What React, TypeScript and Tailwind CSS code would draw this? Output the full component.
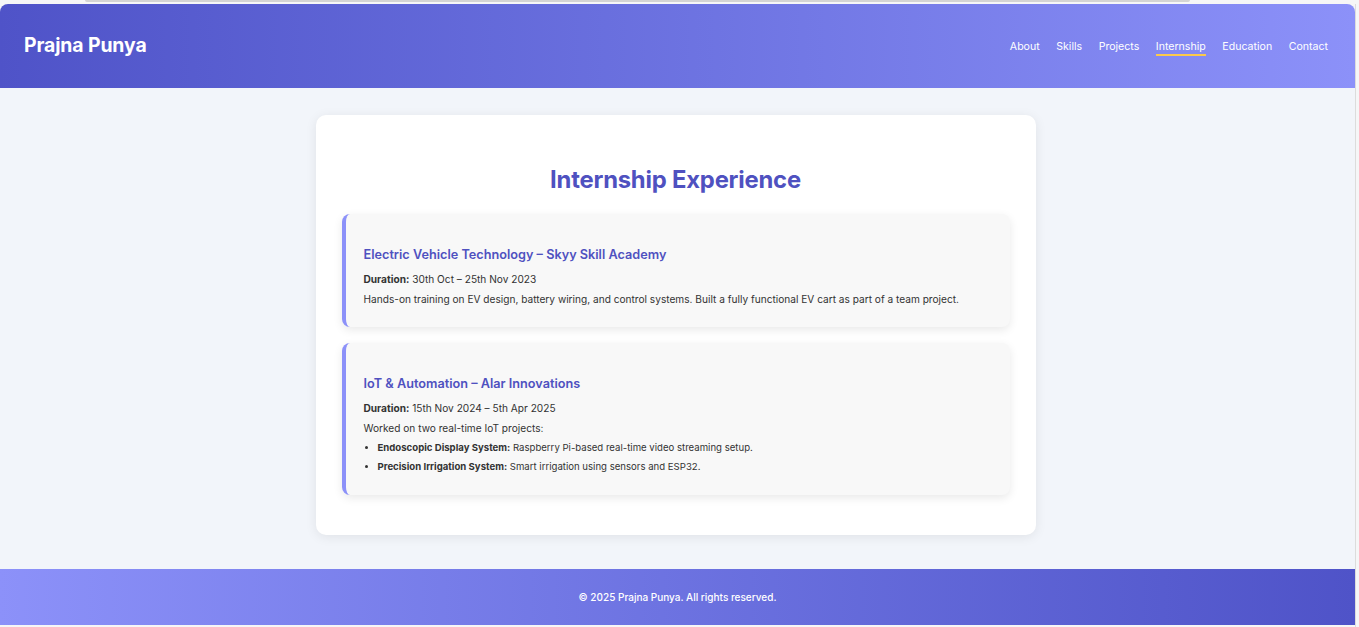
import React from "react";

const navLinks = ["About", "Skills", "Projects", "Internship", "Education", "Contact"];

function Header() {
  return (
    <header className="h-[84px] shrink-0 rounded-t-[8px] bg-gradient-to-r from-[#4f53c8] to-[#8c91f9] flex items-center justify-between pl-[24px] pr-[27px]">
      <h1 className="text-white text-[19.4px] font-bold tracking-[-0.1px]">Prajna Punya</h1>
      <nav className="flex items-center gap-[16.5px] pt-[2px]">
        {navLinks.map((link) => (
          <a
            key={link}
            href="#"
            className={`text-white text-[10.6px] font-normal leading-[15px] ${
              link === "Internship" ? "border-b-2 border-[#fcc94a]" : "border-b-2 border-transparent"
            }`}
          >
            {link}
          </a>
        ))}
      </nav>
    </header>
  );
}

function Internship({ title, duration, children }: { title: string; duration: string; children: React.ReactNode }) {
  return (
    <div className="bg-[#f8f8f8] border-l-4 border-[#8c91f9] rounded-[8px] shadow-[0_3px_10px_rgba(0,0,0,0.09)] pl-[18px] pr-[20px] pt-[33px] pb-[21px]">
      <h3 className="text-[#4f51c0] text-[12.7px] font-semibold leading-[16px]">{title}</h3>
      <p className="text-[#333] text-[10.15px] leading-[14px] mt-[9px]">
        <span className="font-bold">Duration:</span> {duration}
      </p>
      {children}
    </div>
  );
}

export default function App() {
  return (
    <div className="w-[1359px] h-[627px] bg-[#f6f6f7] flex flex-col overflow-hidden" style={{ fontFamily: "Inter, 'Noto Sans', sans-serif" }}>
      {/* frame strip on top */}
      <div className="h-[4px] shrink-0">
        <div className="ml-[85px] w-[1105px] h-[2px] bg-[#d4d4d4] rounded-b" />
      </div>
      <div className="flex flex-1 min-h-0">
        <div className="w-[1355px] flex flex-col">
          <Header />
          <main className="h-[481px] shrink-0 bg-[#f2f5fa] flex justify-center pt-[27px] pr-[4px]">
            <section className="w-[720px] h-[420px] bg-white rounded-[10px] shadow-[0_2px_12px_rgba(0,0,0,0.08)] px-[26px] pt-[50px]">
              <h2 className="text-center text-[#4f51c0] text-[23.8px] font-bold leading-[30px] tracking-[-0.2px]">Internship Experience</h2>
              <div className="flex flex-col gap-[16px] mt-[19px]">
                <Internship title="Electric Vehicle Technology – Skyy Skill Academy" duration="30th Oct – 25th Nov 2023">
                  <p className="text-[#333] text-[10.15px] leading-[14px] mt-[6px]">
                    Hands-on training on EV design, battery wiring, and control systems. Built a fully functional EV cart as part of a team project.
                  </p>
                </Internship>
                <Internship title="IoT & Automation – Alar Innovations" duration="15th Nov 2024 – 5th Apr 2025">
                  <p className="text-[#333] text-[10.15px] leading-[14px] mt-[6px]">Worked on two real-time IoT projects:</p>
                  <ul className="list-disc pl-[14px] mt-[6px] mb-[1px] text-[#333] text-[9.6px] leading-[13px] flex flex-col gap-[6px]">
                    <li>
                      <span className="font-bold">Endoscopic Display System:</span> Raspberry Pi-based real-time video streaming setup.
                    </li>
                    <li>
                      <span className="font-bold">Precision Irrigation System:</span> Smart irrigation using sensors and ESP32.
                    </li>
                  </ul>
                </Internship>
              </div>
            </section>
          </main>
          <footer className="h-[56px] shrink-0 bg-gradient-to-r from-[#8c91f9] to-[#4f53c8] flex items-center justify-center">
            <p className="text-white text-[10px] font-medium">© 2025 Prajna Punya. All rights reserved.</p>
          </footer>
        </div>
        <div className="w-[4px] border-l border-[#dcdcdc] bg-[#f6f6f7]" />
      </div>
    </div>
  );
}
